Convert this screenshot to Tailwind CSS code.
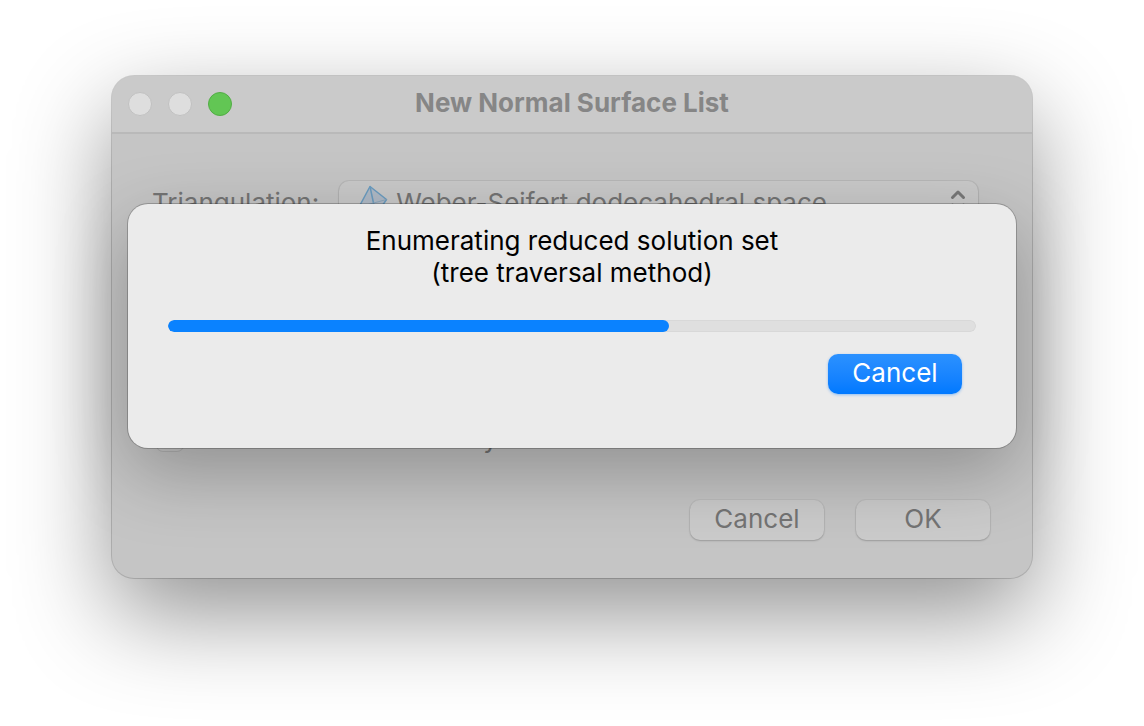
<!DOCTYPE html>
<html lang="en">
<head>
<meta charset="utf-8">
<meta name="viewport" content="width=device-width, initial-scale=1">
<title>New Normal Surface List</title>
<script src="https://cdn.jsdelivr.net/npm/@tailwindcss/browser@4"></script>
</head>
<body class="min-h-screen overflow-hidden bg-white font-['Inter','Liberation_Sans',sans-serif] text-[26px] leading-8">
<main class="px-28 pt-19 pb-20">
  <section class="relative rounded-[22px] bg-[#c5c5c5] shadow-[0_0_0_1px_rgb(0_0_0/0.16),0_36px_96px_rgb(0_0_0/0.43)]" aria-label="New Normal Surface List">
    <header class="grid h-[58px] grid-cols-[1fr_auto_1fr] items-center rounded-t-[22px] border-b-2 border-[#b9b9b9] bg-[#cacaca] px-4">
      <div class="flex items-center gap-4">
        <button type="button" aria-label="Close" class="size-6 rounded-full border border-[#c1c1c1] bg-[#dedede]"></button>
        <button type="button" aria-label="Minimize" class="size-6 rounded-full border border-[#c1c1c1] bg-[#dedede]"></button>
        <button type="button" aria-label="Zoom" class="size-6 rounded-full border border-[#52ad45] bg-[#62c654]"></button>
      </div>
      <h1 class="pb-0.5 text-[26px] font-bold text-[#868686]">New Normal Surface List</h1>
    </header>
    <form class="flex flex-col pt-[47px] pr-[42px] pb-[38px] pl-10 text-[#747474]">
      <div class="mr-3 flex items-center gap-5">
        <label for="tri" class="pt-1">Triangulation:</label>
        <div class="relative flex-1">
          <select id="tri" class="block h-10 w-full appearance-none rounded-[10px] bg-[#c9c9c9] pt-1 pr-12 pl-[57px] shadow-[0_0_0_1px_rgb(0_0_0/0.06),0_1px_2px_rgb(0_0_0/0.15)]">
            <option>Weber-Seifert dodecahedral space</option>
          </select>
          <svg class="pointer-events-none absolute top-1 left-5 size-8" viewBox="0 0 32 32" fill="none" stroke="#6a9cc0" stroke-width="1.5" stroke-linejoin="round" aria-hidden="true">
            <path d="M11 1.500 27.500 14.500 17 30 0 22Z" fill="#b0bac6"/>
            <path d="M11 1.500 17 30"/>
            <path d="M0 22 27.500 14.500" stroke="#8ba6bc" stroke-width="1"/>
          </svg>
          <svg class="pointer-events-none absolute top-2 right-3 h-6 w-4" viewBox="0 0 16 24" fill="none" stroke="#787878" stroke-width="3" stroke-linecap="round" stroke-linejoin="round" aria-hidden="true">
            <path d="M2.500 8.500 8 3l5.500 5.500M2.500 16 8 21.500l5.500-5.500"/>
          </svg>
        </div>
      </div>
      <div class="mt-50 flex items-center gap-2 pl-1">
        <input id="embedded" type="checkbox" class="size-7 appearance-none rounded-[7px] border border-black/10 bg-white/5">
        <label for="embedded" class="pt-0.5">Embedded surfaces only</label>
      </div>
      <div class="mt-[45px] flex justify-end gap-8">
        <button type="button" class="h-10 w-[134px] rounded-[10px] bg-[#cbcbcb] pb-0.5 shadow-[0_0_0_1px_rgb(0_0_0/0.04),0_1px_2px_rgb(0_0_0/0.18)]">Cancel</button>
        <button type="submit" class="h-10 w-[134px] rounded-[10px] bg-[#cbcbcb] pb-0.5 shadow-[0_0_0_1px_rgb(0_0_0/0.04),0_1px_2px_rgb(0_0_0/0.18)]">OK</button>
      </div>
    </form>
    <div role="dialog" aria-labelledby="task" class="absolute inset-x-4 top-32 flex flex-col rounded-[20px] bg-[#ebebeb] px-10 pt-[21px] pb-[54px] shadow-[0_0_0_1px_rgb(0_0_0/0.22),0_24px_72px_rgb(0_0_0/0.27)]">
      <label id="task" for="progress" class="text-center text-black">Enumerating reduced solution set<br>(tree traversal method)</label>
      <progress id="progress" value="62" max="100" class="mt-[31px] block h-3 w-full appearance-none overflow-hidden rounded-full [&::-webkit-progress-bar]:rounded-full [&::-webkit-progress-bar]:bg-[#dfdfdf] [&::-webkit-progress-bar]:shadow-[inset_0_0_0_1px_#d8d8d8] [&::-webkit-progress-value]:rounded-full [&::-webkit-progress-value]:bg-[#0a82ff]"></progress>
      <button type="button" class="mt-[22px] mr-3.5 h-10 w-[134px] self-end rounded-[10px] bg-linear-to-b from-[#2b91ff] to-[#0079ff] pb-0.5 text-white shadow-[0_1px_3px_rgb(0_122_255/0.4)]">Cancel</button>
    </div>
  </section>
</main>
</body>
</html>
